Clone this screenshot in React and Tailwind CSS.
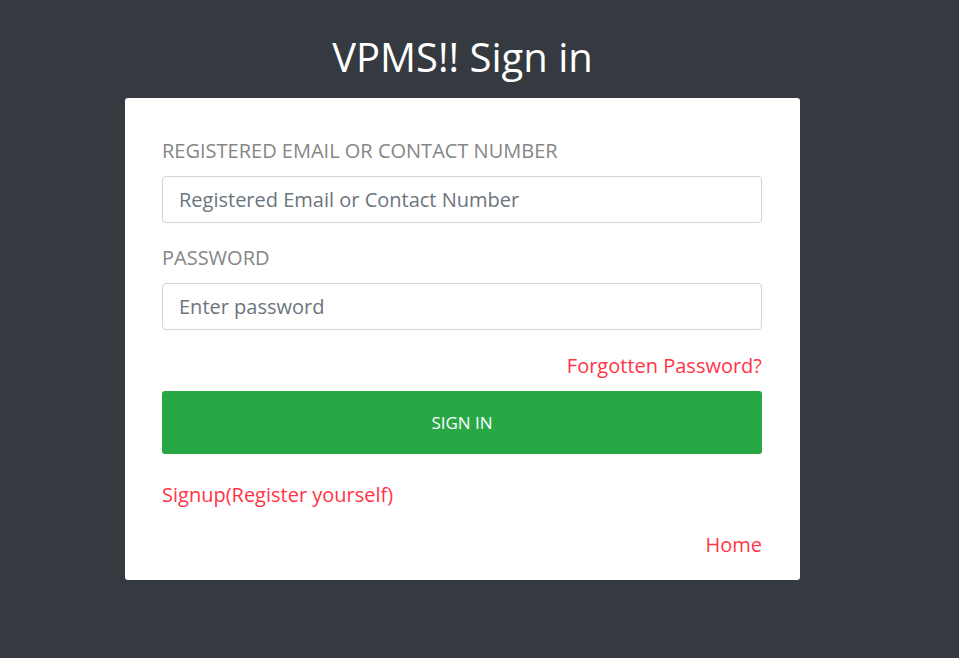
import React from 'react';

const App = () => {
  return (
    <div className="min-h-[658px] w-full bg-[#343a40] font-['Open_Sans','Liberation_Sans',sans-serif]">
      <div className="ml-[125px] w-[675px] pt-[30px]">
        <h1 className="text-center text-[40px] leading-[54px] text-white mb-[14px]">VPMS!! Sign in</h1>

        <div className="bg-white rounded-[3px] pl-[37px] pr-[38px] pt-[38px] pb-[20px]">
          <form onSubmit={(e) => e.preventDefault()}>
            <label className="block text-[20px] leading-[30px] text-[#868686] uppercase mb-[10px]">
              Registered Email or Contact Number
            </label>
            <input
              type="text"
              placeholder="Registered Email or Contact Number"
              className="block w-full h-[47px] px-[16px] text-[20px] text-[#495057] placeholder:text-[#6c757d] border border-[#ced4da] rounded-[4px] outline-none"
            />

            <label className="block text-[20px] leading-[30px] text-[#868686] uppercase mt-[20px] mb-[10px]">
              Password
            </label>
            <input
              type="password"
              placeholder="Enter password"
              className="block w-full h-[47px] px-[16px] text-[20px] text-[#495057] placeholder:text-[#6c757d] border border-[#ced4da] rounded-[4px] outline-none"
            />

            <div className="mt-[21px] text-right text-[20px] leading-[30px]">
              <a href="#" className="text-[#ff3547]">Forgotten Password?</a>
            </div>

            <button
              type="submit"
              className="mt-[10px] block w-full h-[63px] bg-[#28a745] text-white text-[17px] uppercase rounded-[3px]"
            >
              Sign in
            </button>

            <div className="mt-[26px] text-[20px] leading-[30px]">
              <a href="#" className="text-[#ff3547]">Signup(Register yourself)</a>
            </div>

            <div className="mt-[20px] text-right text-[20px] leading-[30px]">
              <a href="#" className="text-[#ff3547]">Home</a>
            </div>
          </form>
        </div>
      </div>
    </div>
  );
};

export default App;
